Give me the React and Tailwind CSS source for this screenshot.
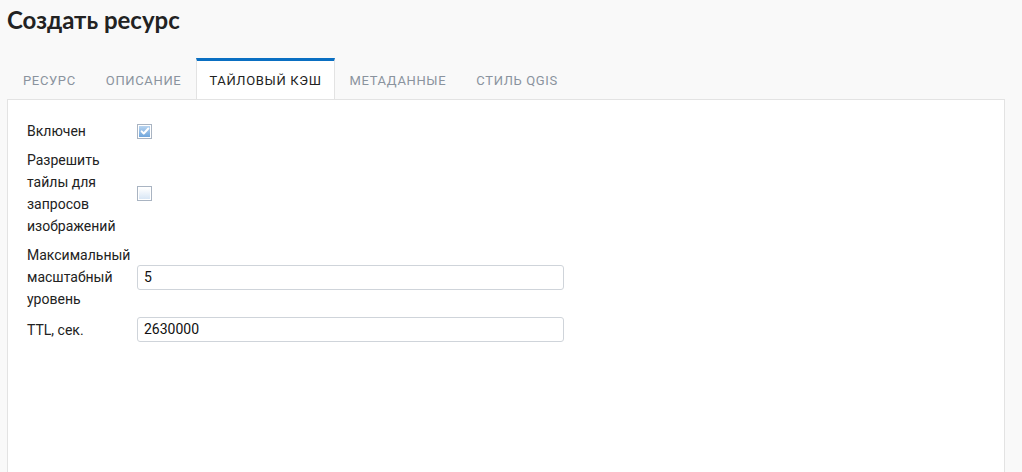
const TABS = ['Ресурс', 'Описание', 'Тайловый кэш', 'Метаданные', 'Стиль QGIS']

function Checkbox({ checked }) {
  return (
    <span className="flex h-[15px] w-[15px] items-center justify-center border border-[#a9b4c2] bg-white p-px">
      <span
        className={`flex h-full w-full items-center justify-center bg-gradient-to-b ${
          checked ? 'from-[#b8d4f0] to-[#6fa6dc]' : 'from-white to-[#d8e6f5]'
        }`}
      >
        {checked && (
          <svg width="10" height="10" viewBox="0 0 12 12" fill="none" stroke="#ffffff" strokeWidth="2.4" strokeLinecap="round" strokeLinejoin="round">
            <path d="M2 6.5l2.5 2.5L10 3" />
          </svg>
        )}
      </span>
    </span>
  )
}

function Row({ label, children }) {
  return (
    <div className="flex items-center">
      <div className="w-[110px] shrink-0 text-[14px] leading-[22px] text-[#222]">{label}</div>
      {children}
    </div>
  )
}

function TextInput({ value }) {
  return (
    <div className="flex h-[25px] w-[427px] items-center rounded-[3px] border border-[#cfd4da] bg-white px-[6px] text-[14px] text-[#111]">
      {value}
    </div>
  )
}

export default function App() {
  return (
    <div className="min-h-[472px] bg-[#f9f9f9] pl-[7px] pr-[17px] font-['Roboto',sans-serif]">
      <h1 className="pt-[5px] font-['Lato',sans-serif] text-[24px] font-bold leading-[30px] text-[#222]">
        Создать ресурс
      </h1>

      {/* вкладки */}
      <div className="mt-[23px] flex">
        {TABS.map((tab, i) => (
          <div
            key={tab}
            className={`h-[41px] text-[13px] uppercase tracking-[0.05em] flex items-center ${
              i === 2
                ? 'px-[12px] border-t-[3px] border-x border-t-[#0a6fc2] border-x-[#e3e3e3] bg-white text-[#222] pt-[1px] -mb-px'
                : 'px-[15px] text-[#8a939e] pt-[4px]'
            } ${i === 0 ? 'pl-[16px]' : ''}`}
          >
            {tab}
          </div>
        ))}
      </div>

      {/* панель */}
      <div className="min-h-[374px] border border-[#e3e3e3] border-b-0 bg-white px-[19px] pt-[20px]">
        <div className="flex flex-col gap-[7px]">
          <Row label="Включен">
            <Checkbox checked />
          </Row>
          <Row label="Разрешить тайлы для запросов изображений">
            <Checkbox />
          </Row>
          <Row label="Максимальный масштабный уровень">
            <TextInput value="5" />
          </Row>
          <Row label="TTL, сек.">
            <TextInput value="2630000" />
          </Row>
        </div>
      </div>
    </div>
  )
}
